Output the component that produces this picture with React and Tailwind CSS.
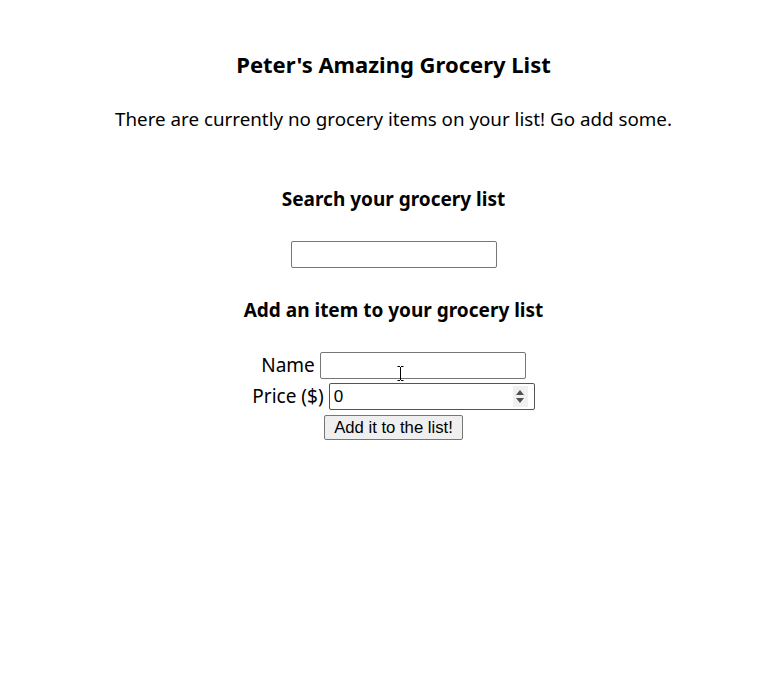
import React, { useState } from 'react';

export default function App() {
  const [search, setSearch] = useState('');
  const [name, setName] = useState('');
  const [price, setPrice] = useState(0);

  return (
    <div className="min-h-[684px] bg-white pl-[19px] text-center text-black font-['Noto_Sans',sans-serif]">
      <h2 className="pt-[49px] text-[22px] font-bold leading-[30px]">Peter's Amazing Grocery List</h2>
      <p className="mt-[27px] text-[18.8px] leading-[26px]">There are currently no grocery items on your list! Go add some.</p>

      <h3 className="mt-[54px] text-[19px] font-bold leading-[26px]">Search your grocery list</h3>
      <div className="mt-[29px] flex justify-center">
        <input
          type="text"
          value={search}
          onChange={(e) => setSearch(e.target.value)}
          className="h-[27px] w-[206px] rounded-[2px] border border-[#767676] px-[3px] text-[17px] font-['Liberation_Sans',sans-serif] outline-none"
        />
      </div>

      <h3 className="mt-[29px] text-[19px] font-bold leading-[26px]">Add an item to your grocery list</h3>
      <form className="mt-[29px] flex flex-col items-center" onSubmit={(e) => e.preventDefault()}>
        <div className="flex items-center gap-[5px]">
          <label className="text-[19px] leading-[27px]">Name</label>
          <div className="relative">
            <input
              type="text"
              value={name}
              onChange={(e) => setName(e.target.value)}
              className="block h-[27px] w-[206px] rounded-[2px] border border-[#767676] px-[3px] text-[17px] font-['Liberation_Sans',sans-serif] outline-none"
            />
            {/* mouse cursor */}
            <svg className="pointer-events-none absolute left-[77px] top-[14px]" width="7" height="15" viewBox="0 0 7 15">
              <path d="M0.5 0.5h2.5M4 0.5h2.5M3.5 1v13M0.5 14.5h2.5M4 14.5h2.5" stroke="#000" strokeWidth="1" fill="none" />
            </svg>
          </div>
        </div>
        <div className="mt-[4px] flex items-center gap-[5px]">
          <label className="text-[19px] leading-[27px]">Price ($)</label>
          <div className="relative">
            <input
              type="text"
              inputMode="numeric"
              value={price}
              onChange={(e) => setPrice(e.target.value)}
              className="block h-[27px] w-[206px] rounded-[2px] border border-[#555] pl-[4px] pr-[24px] text-[17px] font-['Liberation_Sans',sans-serif] outline-none"
            />
            {/* spin buttons */}
            <div className="pointer-events-none absolute right-[7px] top-[3px] flex h-[21px] w-[15px] flex-col items-center justify-center gap-[3px] bg-[#f0f0f0]">
              <svg width="8" height="5" viewBox="0 0 8 5"><path d="M4 0L8 5H0Z" fill="#505050" /></svg>
              <svg width="8" height="5" viewBox="0 0 8 5"><path d="M0 0H8L4 5Z" fill="#505050" /></svg>
            </div>
          </div>
        </div>
        <button
          type="submit"
          className="mt-[5px] h-[25px] rounded-[2px] border border-[#767676] bg-[#efefef] px-[9px] text-[16.7px] leading-[20px] font-['Liberation_Sans',sans-serif]"
        >
          Add it to the list!
        </button>
      </form>
    </div>
  );
}
